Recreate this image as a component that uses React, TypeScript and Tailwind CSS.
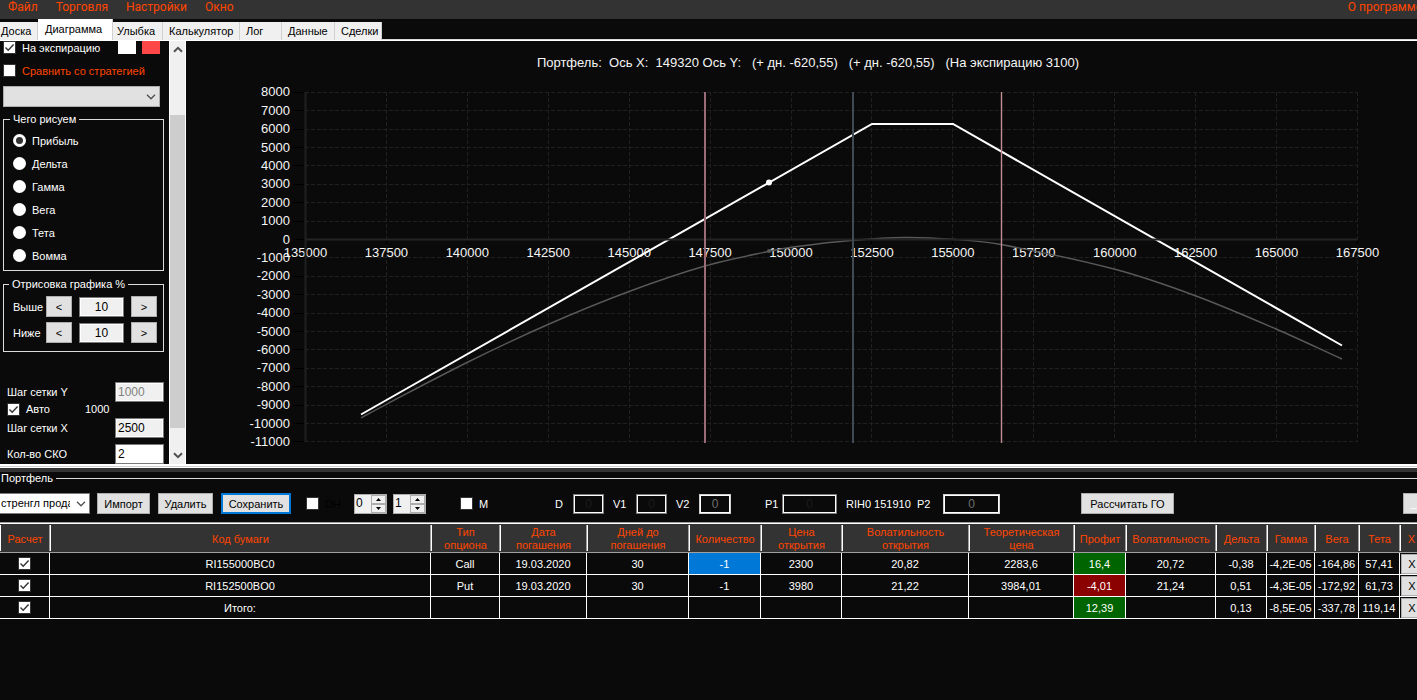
import React from "react";

const MENU = ["Файл", "Торговля", "Настройки", "Окно"];

const TABS: { name: string; width: string; active?: boolean }[] = [
  { name: "Доска", width: "w-[38px] pl-px" },
  { name: "Диаграмма", width: "w-[75px] pl-[7px]", active: true },
  { name: "Улыбка", width: "w-[50px] pl-1" },
  { name: "Калькулятор", width: "w-[77px] pl-[6px]" },
  { name: "Лог", width: "w-[42px] pl-[6px]" },
  { name: "Данные", width: "w-[53px] pl-[6px]" },
  { name: "Сделки", width: "w-[47px] pl-[6px]" },
];

const MODES = ["Прибыль", "Дельта", "Гамма", "Вега", "Тета", "Вомма"];

const CHECK =
  "relative block size-[13px] shrink-0 appearance-none border border-[#333333] bg-white";

function Check({ id, label, on }: { id: string; label?: string; on?: boolean }) {
  return (
    <span className="relative block size-[13px] shrink-0">
      <input id={id} type="checkbox" aria-label={label} defaultChecked={on} className={CHECK + " peer"} />
      <svg
        viewBox="0 0 13 13"
        className="pointer-events-none absolute inset-0 hidden size-[13px] peer-checked:block"
        fill="none"
        stroke="#333333"
        strokeWidth="1.4"
      >
        <path d="M2.5 6.5 L5.2 9.2 L10.6 3.6" />
      </svg>
    </span>
  );
}

function Chevron({ className }: { className: string }) {
  return (
    <svg viewBox="0 0 10 6" className={className} fill="none" stroke="#505050" strokeWidth="1.3">
      <path d="M1 0.8 L5 4.8 L9 0.8" />
    </svg>
  );
}

function MenuBar() {
  return (
    <nav className="flex h-[19px] overflow-hidden bg-[#333333] pl-2 font-[Roboto,'Noto_Sans',sans-serif] text-[12px] leading-[14px] text-[#ff4500]">
      <div className="flex gap-[18px]">
        {MENU.map((m) => (
          <button key={m} className="h-[14px] whitespace-nowrap">
            {m}
          </button>
        ))}
      </div>
      <button className="-mr-[5px] ml-auto h-[14px] whitespace-nowrap">О программе</button>
    </nav>
  );
}

function TabStrip() {
  return (
    <div role="tablist" className="flex h-[22px] items-end border-b border-white">
      {TABS.map((t) => (
        <button
          key={t.name}
          role="tab"
          aria-selected={!!t.active}
          className={
            t.width +
            " shrink-0 whitespace-nowrap border-r border-[#d0d0d0] text-left text-black " +
            (t.active ? "h-[21px] bg-white" : "h-[18px] bg-[#f0f0f0]")
          }
        >
          {t.name}
        </button>
      ))}
      <div className="h-px flex-1 bg-[#d9d9d9]" />
    </div>
  );
}

const FIELD = "border border-[#7a7a7a] outline outline-1 -outline-offset-2 outline-white";
const BTN = "border border-[#adadad] bg-[#e1e1e1] pt-px text-black";

function Range({ label }: { label: string }) {
  return (
    <div className="flex h-[21px] items-center">
      <label htmlFor={"r-" + label} className="w-[34px] pl-px pt-px">
        {label}
      </label>
      <button aria-label={label + " меньше"} className={BTN + " h-[21px] w-[26px]"}>
        &lt;
      </button>
      <input
        id={"r-" + label}
        defaultValue="10"
        className={FIELD + " ml-[7px] h-[20px] w-[45px] bg-[#f0f0f0] text-center text-[12px] text-black"}
      />
      <button aria-label={label + " больше"} className={BTN + " ml-[7px] h-[21px] w-[26px]"}>
        &gt;
      </button>
    </div>
  );
}

function Sidebar() {
  return (
    <aside className="flex shrink-0">
      <div className="w-[169px] overflow-hidden pl-[3px]">
        <div className="flex h-[13px] items-center">
          <Check id="exp" on />
          <label htmlFor="exp" className="w-[102px] whitespace-nowrap pl-[6px] pt-px">
            На экспирацию
          </label>
          <button aria-label="Цвет линии" className="h-[13px] w-[18px] bg-white" />
          <button aria-label="Цвет сравнения" className="ml-[6px] h-[13px] w-[18px] bg-[#ff4747]" />
        </div>
        <div className="mt-[10px] flex h-[13px] items-center text-[#ff4500]">
          <Check id="cmp" />
          <label htmlFor="cmp" className="whitespace-nowrap pl-[6px] pt-px">
            Сравнить со стратегией
          </label>
        </div>
        <div className="relative mt-[9px] w-[157px]">
          <select
            aria-label="Стратегия"
            className="block h-[21px] w-full appearance-none border border-[#adadad] bg-[#e1e1e1]"
          />
          <Chevron className="pointer-events-none absolute right-1 top-2 h-[6px] w-[10px]" />
        </div>

        <fieldset className="mt-[6px] h-[158px] w-[161px] border border-[#dcdcdc] pl-[9px]">
          <legend className="-ml-[3px] px-[3px] leading-[13px]">Чего рисуем</legend>
          <div className="pt-[3px]">
            {MODES.map((m, i) => (
              <label key={m} className="flex h-[23px] items-center gap-[6px]">
                <input
                  type="radio"
                  name="mode"
                  defaultChecked={i === 0}
                  className="size-[13px] appearance-none rounded-full border-[3px] border-white bg-white checked:bg-[#333333]"
                />
                <span className="pt-px">{m}</span>
              </label>
            ))}
          </div>
        </fieldset>

        <fieldset className="mt-[7px] h-[74px] w-[161px] border border-[#dcdcdc] pl-[8px]">
          <legend className="-ml-[3px] px-[3px] leading-[13px]">Отрисовка графика %</legend>
          <div className="flex flex-col gap-[5px] pt-[5px]">
            <Range label="Выше" />
            <Range label="Ниже" />
          </div>
        </fieldset>

        <div className="mt-[30px] flex flex-col pl-1">
          <div className="flex h-[20px] items-center">
            <label htmlFor="gy" className="w-[108px]">
              Шаг сетки Y
            </label>
            <input
              id="gy"
              disabled
              defaultValue="1000"
              className={FIELD + " h-[20px] w-[49px] bg-[#f0f0f0] pl-[2px] text-[12px] text-[#808080]"}
            />
          </div>
          <div className="mb-[2px] flex h-[14px] items-center">
            <Check id="auto" on />
            <label htmlFor="auto" className="w-[65px] pl-[6px]">
              Авто
            </label>
            <output>1000</output>
          </div>
          <div className="flex h-[20px] items-center">
            <label htmlFor="gx" className="w-[108px]">
              Шаг сетки X
            </label>
            <input
              id="gx"
              defaultValue="2500"
              className={FIELD + " h-[20px] w-[49px] bg-[#f0f0f0] pl-[2px] text-[12px] text-black"}
            />
          </div>
          <div className="mt-[6px] flex h-[20px] items-center">
            <label htmlFor="sko" className="w-[108px]">
              Кол-во СКО
            </label>
            <input
              id="sko"
              defaultValue="2"
              className={FIELD + " h-[20px] w-[49px] bg-white pl-[2px] text-[12px] text-black"}
            />
          </div>
        </div>
      </div>

      <div className="flex w-[17px] flex-col border-x border-white bg-[#f0f0f0]">
        <button aria-label="Вверх" className="flex h-[17px] items-center justify-center">
          <svg viewBox="0 0 10 7" className="h-[7px] w-[10px]" fill="none" stroke="#505050" strokeWidth="2">
            <path d="M1 5.8 L5 1.8 L9 5.8" />
          </svg>
        </button>
        <div className="mb-[19px] mt-auto h-[313px] bg-[#cdcdcd]" />
        <button aria-label="Вниз" className="flex h-[17px] items-center justify-center">
          <svg viewBox="0 0 10 7" className="h-[7px] w-[10px]" fill="none" stroke="#505050" strokeWidth="2">
            <path d="M1 1.2 L5 5.2 L9 1.2" />
          </svg>
        </button>
      </div>
    </aside>
  );
}

const px = (v: number) => 119.5 + ((v - 135000) / 2500) * 80.92;
const py = (v: number) => 198.5 - (v / 1000) * 18.4;

const xTicks = Array.from({ length: 14 }, (_, i) => 135000 + i * 2500);
const yTicks = Array.from({ length: 20 }, (_, i) => 8000 - i * 1000);

const CURRENT: [number, number][] = [
  [175, 377], [200, 363.5], [281, 321.5], [362, 283.5], [443, 250.5], [519, 225], [583, 210.3], [609, 205.8],
  [667, 199.3], [719, 196.5], [769, 198.5], [815, 203.5], [929, 228.3], [1010, 255], [1090, 288], [1156, 318],
];

function smooth(p: [number, number][]) {
  let d = `M${p[0][0]} ${p[0][1]}`;
  for (let i = 0; i < p.length - 1; i++) {
    const a = p[Math.max(i - 1, 0)];
    const b = p[i];
    const c = p[i + 1];
    const e = p[Math.min(i + 2, p.length - 1)];
    const h = (c[0] - b[0]) / 3;
    const m1 = (c[1] - a[1]) / (c[0] - a[0]);
    const m2 = (e[1] - b[1]) / (e[0] - b[0]);
    d += ` C${b[0] + h} ${b[1] + m1 * h} ${c[0] - h} ${c[1] - m2 * h} ${c[0]} ${c[1]}`;
  }
  return d;
}

function Chart() {
  return (
    <div className="min-w-0 flex-1">
      <svg viewBox="0 0 1231 423" className="block h-[423px] w-full" role="img" aria-label="Диаграмма портфеля">
        <g stroke="#202020" strokeWidth="1" strokeDasharray="4 2" shapeRendering="crispEdges">
          {xTicks.map((v) => (
            <line key={v} x1={px(v)} x2={px(v)} y1={51} y2={401} />
          ))}
          {yTicks.map((v) => (
            <line key={v} x1={119} x2={1171} y1={py(v)} y2={py(v)} />
          ))}
        </g>
        <g stroke="#000000" shapeRendering="crispEdges">
          {yTicks.map((v) => (
            <line key={v} x1={107} x2={118} y1={py(v)} y2={py(v)} />
          ))}
          {xTicks.map((v) => (
            <line key={v} x1={px(v)} x2={px(v)} y1={200} y2={204} />
          ))}
        </g>
        <g fill="#f5f5f5" className="text-[13px]">
          {yTicks.map((v) => (
            <text key={v} x={104} y={py(v) + 4} textAnchor="end">
              {v}
            </text>
          ))}
          {xTicks.map((v) => (
            <text key={v} x={px(v)} y={216} textAnchor="middle">
              {v}
            </text>
          ))}
        </g>
        <text x={622} y={26} textAnchor="middle" fill="#f5f5f5" className="whitespace-pre text-[13px]">
          {"Портфель:  Ось X:  149320 Ось Y:   (+ дн. -620,55)   (+ дн. -620,55)   (На экспирацию 3100)"}
        </text>
        <path d={smooth(CURRENT)} fill="none" stroke="#595959" strokeWidth="1.4" />
        <circle cx={583} cy={210} r={2} fill="#595959" />
        <path d="M175 373.5 L686 83 H767 L1156 304.5" fill="none" stroke="#ffffff" strokeWidth="2" />
        <circle cx={583} cy={141.5} r={3} fill="#ffffff" />
        <line x1={119.5} x2={119.5} y1={51} y2={401} stroke="#202020" strokeWidth="2" />
        <line x1={119} x2={1171} y1={198.5} y2={198.5} stroke="#242424" strokeWidth="2" />
        <line x1={519} x2={519} y1={51} y2={402} stroke="#9c6b78" strokeWidth="2" />
        <line x1={667} x2={667} y1={51} y2={402} stroke="#414a54" strokeWidth="2" />
        <line x1={815.5} x2={815.5} y1={51} y2={402} stroke="#c48d93" strokeWidth="1.4" />
      </svg>
    </div>
  );
}

function Spin({ label, value }: { label: string; value: string }) {
  return (
    <div className="flex h-[20px] w-[33px] border border-[#adadad] bg-[#f0f0f0] text-black">
      <input aria-label={label} defaultValue={value} className="w-[16px] pl-px text-[12px]" />
      <div className="flex flex-1 flex-col">
        {["M2 6 L4.5 3 L7 6 Z", "M2 3 L4.5 6 L7 3 Z"].map((d, i) => (
          <button
            key={d}
            aria-label={i === 0 ? label + " больше" : label + " меньше"}
            className="flex h-[9px] items-center justify-center border border-[#adadad]"
          >
            <svg viewBox="0 0 9 9" className="size-[9px]" fill="#000000">
              <path d={d} />
            </svg>
          </button>
        ))}
      </div>
    </div>
  );
}

function Param({ label, id, labelCls, inputCls }: { label: string; id: string; labelCls: string; inputCls: string }) {
  return (
    <>
      <label htmlFor={id} className={"shrink-0 whitespace-nowrap pt-px " + labelCls}>
        {label}
      </label>
      <input id={id} defaultValue="0" className={"h-[20px] shrink-0 bg-transparent text-center text-[12px] " + inputCls} />
    </>
  );
}

const DARK = "border border-[#7a7a7a] outline outline-1 -outline-offset-2 outline-white text-[#1c1c1c]";
const LITE = "border border-[#cfcfcf] outline outline-1 -outline-offset-2 outline-white text-[#707070]";

function Toolbar() {
  return (
    <div className="flex h-[37px] items-center overflow-hidden">
      <div className="relative w-[90px] shrink-0">
        <select
          aria-label="Портфель"
          className="block h-[21px] w-full appearance-none overflow-hidden border border-l-0 border-[#7a7a7a] bg-white pl-px pr-[19px] text-black"
        >
          <option>стренгл продажа</option>
        </select>
        <Chevron className="pointer-events-none absolute right-[4px] top-2 h-[6px] w-[10px]" />
      </div>
      <button className={BTN + " ml-[7px] h-[21px] w-[53px] shrink-0"}>Импорт</button>
      <button className={BTN + " ml-[8px] h-[21px] w-[55px] shrink-0"}>Удалить</button>
      <button className="ml-[8px] h-[21px] w-[70px] shrink-0 border-2 border-[#0078d7] bg-[#e1e1e1] pt-px text-black">
        Сохранить
      </button>
      <div className="ml-[15px] flex w-[48px] shrink-0 items-center">
        <Check id="dh" />
        <label htmlFor="dh" className="pl-[6px] pt-px text-black">
          DH
        </label>
      </div>
      <div className="flex shrink-0 gap-[6px]">
        <Spin label="DH от" value="0" />
        <Spin label="DH до" value="1" />
      </div>
      <div className="ml-[34px] flex w-[95px] shrink-0 items-center">
        <Check id="m" />
        <label htmlFor="m" className="pl-[6px] pt-px">
          M
        </label>
      </div>
      <Param label="D" id="d" labelCls="w-[18px]" inputCls={"w-[31px] " + DARK} />
      <Param label="V1" id="v1" labelCls="ml-[9px] w-[23px]" inputCls={"w-[31px] " + DARK} />
      <Param label="V2" id="v2" labelCls="ml-[9px] w-[23px]" inputCls={"w-[32px] " + LITE} />
      <Param label="P1" id="p1" labelCls="ml-[34px] w-[17px]" inputCls={"w-[55px] " + DARK} />
      <span className="ml-[9px] w-[71px] shrink-0 whitespace-nowrap pt-px">RIH0 151910</span>
      <Param label="P2" id="p2" labelCls="w-[26px]" inputCls={"w-[57px] " + LITE} />
      <button className={BTN + " ml-[81px] h-[21px] w-[93px] shrink-0 whitespace-nowrap"}>Рассчитать ГО</button>
      <button className="-mr-[8px] ml-auto h-[21px] w-[22px] shrink-0 border border-[#adadad] bg-[#e1e1e1] pr-px text-white">
        _
      </button>
    </div>
  );
}

const COLUMNS: [string, string][] = [
  ["Расчет", "w-[50px]"],
  ["Код бумаги", ""],
  ["Тип опциона", "w-[69px]"],
  ["Дата погашения", "w-[87px]"],
  ["Дней до погашения", "w-[102px]"],
  ["Количество", "w-[72px]"],
  ["Цена открытия", "w-[81px]"],
  ["Волатильность открытия", "w-[127px]"],
  ["Теоретическая цена", "w-[105px]"],
  ["Профит", "w-[52px]"],
  ["Волатильность", "w-[90px]"],
  ["Дельта", "w-[51px]"],
  ["Гамма", "w-[48px]"],
  ["Вега", "w-[44px]"],
  ["Тета", "w-[41px]"],
  ["X", "w-[23px]"],
];

const ROWS: string[][] = [
  ["RI155000BC0", "Call", "19.03.2020", "30", "-1", "2300", "20,82", "2283,6", "16,4", "20,72", "-0,38", "-4,2E-05", "-164,86", "57,41"],
  ["RI152500BO0", "Put", "19.03.2020", "30", "-1", "3980", "21,22", "3984,01", "-4,01", "21,24", "0,51", "-4,3E-05", "-172,92", "61,73"],
  ["Итого:", "", "", "", "", "", "", "", "12,39", "", "0,13", "-8,5E-05", "-337,78", "119,14"],
];

function cellTone(row: number, col: number) {
  if (row === 0 && col === 4) return "bg-[#0078d7]";
  if (col === 8) return row === 1 ? "bg-[#8b0000]" : "bg-[#006400]";
  return "";
}

function Positions() {
  return (
    <div className="overflow-hidden border-t border-[#a0a0a0]">
      <table className="w-[calc(100%+6px)] table-fixed border-separate border-spacing-0">
        <thead>
          <tr>
            {COLUMNS.map(([name, width]) => (
              <th
                key={name + width}
                className={
                  width +
                  " h-[30px] border-b border-t border-b-[#a0a0a0] border-t-white bg-[#333333] p-0 font-normal leading-[13px] text-[#ff4500]"
                }
              >
                <div className="flex h-[26px] items-center justify-center border-l border-r border-l-white border-r-[#a0a0a0] pt-[2px]">
                  <span className={name.includes("бумаги") ? "" : "w-min"}>{name}</span>
                </div>
              </th>
            ))}
          </tr>
        </thead>
        <tbody className="text-center">
          {ROWS.map((row, r) => (
            <tr key={row[0]}>
              <td className="h-[22px] border-b border-r border-white p-0">
                <div className="flex justify-center">
                  <Check id={"row-" + r} label={"Расчет " + row[0]} on />
                </div>
              </td>
              {row.map((v, c) => (
                <td key={c} className={"h-[22px] whitespace-nowrap border-b border-r border-white p-0 pt-[2px] " + cellTone(r, c)}>
                  {v}
                </td>
              ))}
              <td className="h-[22px] border-b border-white p-0">
                <button
                  aria-label={"Удалить " + row[0]}
                  className="ml-px block h-[20px] w-[22px] border border-[#adadad] bg-[#e1e1e1] pt-px text-black"
                >
                  X
                </button>
              </td>
            </tr>
          ))}
        </tbody>
      </table>
    </div>
  );
}

export default function App() {
  return (
    <div className="min-h-screen overflow-hidden bg-[#0a0a0a] font-['Liberation_Sans',Arial,sans-serif] text-[11px] leading-[13px] text-white">
      <MenuBar />
      <TabStrip />
      <main className="flex">
        <Sidebar />
        <Chart />
      </main>
      <div className="h-[4px] border-y border-t-2 border-white bg-[#d0d0d0]" />
      <div className="h-[4px] bg-[#333333]" />
      <fieldset className="min-w-0 border-t border-[#dcdcdc]">
        <legend className="pl-px pr-[3px] leading-[13px]">Портфель</legend>
        <Toolbar />
        <Positions />
      </fieldset>
    </div>
  );
}
